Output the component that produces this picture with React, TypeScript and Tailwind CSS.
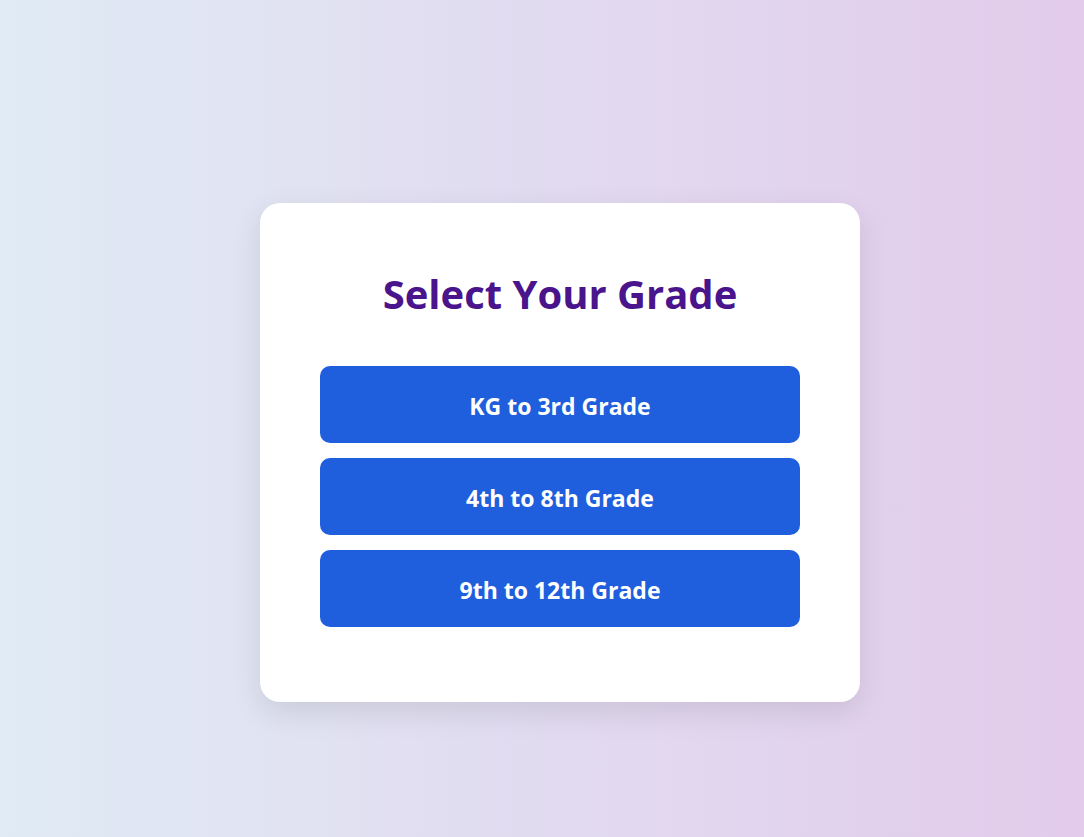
import React from 'react';

const grades = ['KG to 3rd Grade', '4th to 8th Grade', '9th to 12th Grade'];

const App: React.FC = () => {
  return (
    <div
      className="min-h-screen w-full flex items-center justify-center pl-[36px] pt-[68px] bg-gradient-to-r from-[#e0ebf5] to-[#e2cbeb]"
      style={{ fontFamily: '"Open Sans", "Noto Sans", sans-serif' }}
    >
      <div className="w-[600px] bg-white rounded-[20px] px-[60px] pt-[60px] pb-[60px] shadow-[0_10px_30px_rgba(0,0,0,0.1)]">
        <h1 className="text-center text-[40px] leading-[48px] font-bold text-[#4a148c] mt-[7px] mb-[48px]">
          Select Your Grade
        </h1>
        <div className="flex flex-col">
          {grades.map((g) => (
            <button
              key={g}
              className="w-full h-[77px] mb-[15px] pt-[3px] rounded-[10px] bg-[#1f5edd] text-white text-[23px] font-bold hover:bg-[#1a4fc0] transition-colors"
            >
              {g}
            </button>
          ))}
        </div>
      </div>
    </div>
  );
};

export default App;
